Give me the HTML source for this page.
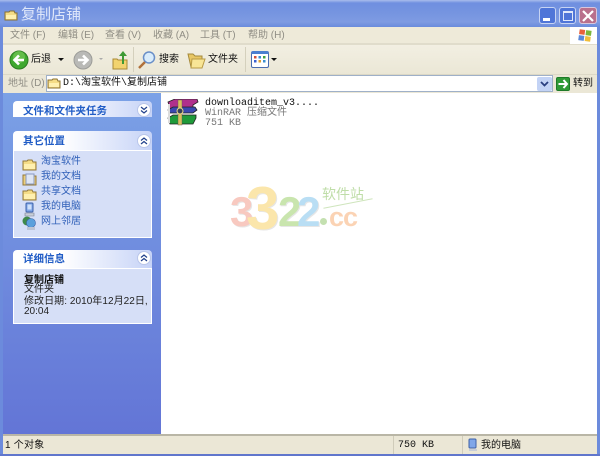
<!DOCTYPE html>
<html><head><meta charset="utf-8">
<style>
html,body{margin:0;padding:0;width:600px;height:457px;overflow:hidden;background:#fff}
*{box-sizing:border-box}
body{font:10px "Liberation Sans","WenQuanYi Zen Hei","Noto Sans CJK SC",sans-serif;position:relative;color:#222}
.a{position:absolute}
.t{position:absolute;white-space:nowrap;line-height:12px}
.g{color:#8f8d84}
.b{color:#215dc6}
.hd{position:absolute;left:13px;width:139px;background:linear-gradient(90deg,#fff 0%,#fff 35%,#c6d3f7 100%);border-radius:4px 4px 0 0}
.bd{position:absolute;left:13px;width:139px;background:#d6dff7;border:1px solid #fff;border-top:1px solid #fff}
.ch{position:absolute;left:137px;width:14px;height:14px;border-radius:50%;background:#fff;border:1px solid #b9c6ea}
.ht{position:absolute;left:23px;font-weight:bold;color:#215dc6;line-height:12px;font-size:10.5px;white-space:nowrap}
.w{position:absolute;font-family:"Liberation Sans",sans-serif;font-weight:bold;white-space:nowrap;text-shadow:1px 1px 0 #e6e6e6}
</style></head><body>
<!-- title -->
<div class="a" style="left:0;top:0;width:600px;height:27px;background:linear-gradient(180deg,#a9bcec 0,#6f8fe0 3px,#7594e0 12px,#7e9be2 22px,#6a8bdc 27px)"></div>
<svg class="a" style="left:4px;top:9px" width="14" height="12"><path d="M1 3h4l1-1h4l1 2h2v7H1z" fill="#f5dc86" stroke="#8a7132" stroke-width="1"/><path d="M2 6h10v4H2z" fill="#fff0b0"/></svg>
<div class="t" style="left:21px;top:7px;font-size:15px;line-height:16px;color:#dfe7fa">复制店铺</div>
<!-- window buttons -->
<div class="a" style="left:539px;top:7px;width:17px;height:17px;background:#4f75d8;border:1px solid #c6d3f3;border-radius:3px"></div>
<div class="a" style="left:543px;top:18px;width:7px;height:3px;background:#fff"></div>
<div class="a" style="left:559px;top:7px;width:17px;height:17px;background:#4f75d8;border:1px solid #c6d3f3;border-radius:3px"></div>
<div class="a" style="left:563px;top:11px;width:10px;height:10px;border:1px solid #dfe7fa;border-top:2px solid #dfe7fa"></div>
<div class="a" style="left:579px;top:7px;width:18px;height:17px;background:#b9708c;border:1px solid #d9c6dc;border-radius:3px"></div>
<svg class="a" style="left:582px;top:10px" width="12" height="12"><path d="M1 1L11 11M11 1L1 11" stroke="#fff" stroke-width="2.2"/></svg>
<!-- left/right edges -->
<div class="a" style="left:0;top:27px;width:3px;height:429px;background:#6c8bdc"></div>
<div class="a" style="left:597px;top:27px;width:3px;height:429px;background:#6c8bdc"></div>
<!-- menu -->
<div class="a" style="left:3px;top:27px;width:594px;height:17px;background:#eeead9"></div>
<div class="a" style="left:3px;top:43px;width:594px;height:2px;background:#e0dccb"></div>
<div class="a" style="left:570px;top:27px;width:27px;height:17px;background:#fff"></div>
<svg class="a" style="left:577px;top:28px" width="16" height="15"><g transform="rotate(8 8 7)"><rect x="2" y="2" width="5.5" height="5" fill="#e8603a"/><rect x="8.5" y="2" width="5.5" height="5" fill="#7db53a"/><rect x="2" y="8" width="5.5" height="5" fill="#5a88d8"/><rect x="8.5" y="8" width="5.5" height="5" fill="#f0bd3a"/></g></svg>
<div class="t g" style="left:10px;top:30px">文件 (F)</div>
<div class="t g" style="left:58px;top:30px">编辑 (E)</div>
<div class="t g" style="left:105px;top:30px">查看 (V)</div>
<div class="t g" style="left:153px;top:30px">收藏 (A)</div>
<div class="t g" style="left:200px;top:30px">工具 (T)</div>
<div class="t g" style="left:248px;top:30px">帮助 (H)</div>
<!-- toolbar -->
<div class="a" style="left:3px;top:45px;width:594px;height:29px;background:linear-gradient(180deg,#f2efe2,#ebe7d6)"></div>
<svg class="a" style="left:9px;top:50px" width="20" height="20"><circle cx="10" cy="10" r="9" fill="#3fa82f" stroke="#2c7d22"/><circle cx="10" cy="7" r="6" fill="#7ccb5c" opacity=".6"/><path d="M15 10H6M10 5.5L5.5 10L10 14.5" stroke="#fff" stroke-width="2.6" fill="none"/></svg>
<div class="t" style="left:31px;top:54px;color:#111">后退</div>
<div class="a" style="left:58px;top:58px;border:3px solid transparent;border-top:3px solid #111"></div>
<svg class="a" style="left:73px;top:50px" width="20" height="20"><circle cx="10" cy="10" r="9" fill="#b9b9b6" stroke="#9c9c98"/><path d="M5 10H14M10 5.5L14.5 10L10 14.5" stroke="#fff" stroke-width="2.6" fill="none"/></svg>
<div class="a" style="left:99px;top:58px;border:2px solid transparent;border-top:2px solid #aaa"></div>
<svg class="a" style="left:112px;top:50px" width="18" height="20"><path d="M1 9h4l1 1h9v9H1z" fill="#f2d36e" stroke="#a98a35"/><path d="M10 14V6H7l4-5 4 5h-3v8z" fill="#3e9a35"/></svg>
<div class="a" style="left:133px;top:47px;width:1px;height:25px;background:#d4d0bd"></div>
<svg class="a" style="left:137px;top:50px" width="20" height="20"><path d="M2 18L8 12" stroke="#b0703a" stroke-width="2.5"/><circle cx="12" cy="7.5" r="5.5" fill="#d9ecfb" stroke="#6a8fc8" stroke-width="1.5"/></svg>
<div class="t" style="left:159px;top:54px;color:#111">搜索</div>
<svg class="a" style="left:187px;top:51px" width="19" height="18"><path d="M1 3h5l2 2h7v11H4z" fill="#e8c765" stroke="#a58a3c"/><path d="M5 8h13l-3 9H4z" fill="#f8e596" stroke="#b89a45"/></svg>
<div class="t" style="left:208px;top:54px;color:#111">文件夹</div>
<div class="a" style="left:245px;top:47px;width:1px;height:25px;background:#d4d0bd"></div>
<div class="a" style="left:251px;top:51px;width:18px;height:17px;background:#fff;border:1px solid #4a6db0;border-top:3px solid #4a7fd0;border-radius:2px"></div>
<svg class="a" style="left:253px;top:55px" width="14" height="11"><g><rect x="1" y="1" width="2.5" height="2.5" fill="#d0503a"/><rect x="5.5" y="1" width="2.5" height="2.5" fill="#3a8ed0"/><rect x="10" y="1" width="2.5" height="2.5" fill="#40a040"/><rect x="1" y="5" width="2.5" height="2.5" fill="#3a60d0"/><rect x="5.5" y="5" width="2.5" height="2.5" fill="#e0a030"/><rect x="10" y="5" width="2.5" height="2.5" fill="#3a8ed0"/></g></svg>
<div class="a" style="left:271px;top:58px;border:3px solid transparent;border-top:3px solid #111"></div>
<!-- address -->
<div class="a" style="left:3px;top:74px;width:594px;height:19px;background:#ebe7d6;border-top:1px solid #dcd8c6"></div>
<div class="t g" style="left:8px;top:78px">地址 (D)</div>
<div class="a" style="left:46px;top:75px;width:507px;height:17px;background:#fff;border:1px solid #9fb0c8"></div>
<svg class="a" style="left:47px;top:77px" width="14" height="13"><path d="M1 3h4l1-1h4l1 2h2v7H1z" fill="#f5dc86" stroke="#8a7132"/><path d="M2 6h10v4H2z" fill="#fff0b0"/></svg>
<div class="t" style="left:63px;top:78px;color:#111;font-family:'Liberation Mono','WenQuanYi Zen Hei',monospace">D:\淘宝软件\复制店铺</div>
<div class="a" style="left:537px;top:77px;width:15px;height:14px;background:#c3d3f5;border-radius:2px"></div>
<svg class="a" style="left:540px;top:80px" width="9" height="8"><path d="M1 2L4.5 5.5L8 2" stroke="#2a3f80" stroke-width="1.8" fill="none"/></svg>
<div class="a" style="left:556px;top:77px;width:14px;height:14px;background:#2f9a36;border:1px solid #1e7a28;border-radius:2px"></div>
<svg class="a" style="left:557px;top:78px" width="12" height="12"><path d="M1.5 6H10M6.5 2L10 6L6.5 10" stroke="#fff" stroke-width="2" fill="none"/></svg>
<div class="t" style="left:573px;top:78px;color:#111">转到</div>
<!-- sidebar -->
<div class="a" style="left:3px;top:93px;width:158px;height:341px;background:linear-gradient(180deg,#7ba1e6,#6375d6)"></div>
<div class="hd" style="top:101px;height:16px"></div>
<div class="ht" style="top:105px;color:#215dc6">文件和文件夹任务</div>
<div class="ch" style="top:103px"></div>
<svg class="a" style="left:140px;top:106px" width="8" height="8"><path d="M1 1L4 3.5L7 1M1 4.5L4 7L7 4.5" stroke="#1f3f8a" stroke-width="1.2" fill="none"/></svg>
<div class="hd" style="top:131px;height:19px"></div>
<div class="ht" style="top:135px">其它位置</div>
<div class="ch" style="top:134px"></div>
<svg class="a" style="left:140px;top:137px" width="8" height="8"><path d="M1 3.5L4 1L7 3.5M1 7L4 4.5L7 7" stroke="#1f3f8a" stroke-width="1.2" fill="none"/></svg>
<div class="bd" style="top:150px;height:88px"></div>
<svg class="a" style="left:22px;top:158px" width="15" height="13"><path d="M1 3h4l1-1h4l1 2h3v8H1z" fill="#f5dc86" stroke="#94793a"/><path d="M2 6h11v5H2z" fill="#fff0b0"/></svg>
<div class="t b" style="left:41px;top:156px;color:#2f5fb8">淘宝软件</div>
<svg class="a" style="left:22px;top:172px" width="15" height="14"><path d="M1 3h4l1-1h4l1 2h3v9H1z" fill="#eccf7c" stroke="#94793a"/><rect x="4" y="2" width="8" height="10" fill="#dfe6f4" stroke="#8a9ac0"/></svg>
<div class="t b" style="left:41px;top:171px;color:#2f5fb8">我的文档</div>
<svg class="a" style="left:22px;top:188px" width="15" height="13"><path d="M1 3h4l1-1h4l1 2h3v8H1z" fill="#f5dc86" stroke="#94793a"/><path d="M2 6h11v5H2z" fill="#fff0b0"/></svg>
<div class="t b" style="left:41px;top:186px;color:#2f5fb8">共享文档</div>
<svg class="a" style="left:23px;top:202px" width="13" height="15"><rect x="3" y="1" width="7" height="9" rx="1" fill="#7fa6e8" stroke="#3f62a8"/><rect x="4.5" y="2.5" width="4" height="5" fill="#cfe0fa"/><path d="M2 11h9v3H2z" fill="#c8ced8" stroke="#7a8090" stroke-width=".6"/></svg>
<div class="t b" style="left:41px;top:201px;color:#2f5fb8">我的电脑</div>
<svg class="a" style="left:22px;top:216px" width="15" height="15"><circle cx="5" cy="5" r="4.5" fill="#3f8a4a"/><circle cx="9" cy="7" r="4.5" fill="#5aa0dc" stroke="#3f62a8" stroke-width=".6"/><rect x="5" y="11" width="8" height="3" fill="#bcc4d4"/></svg>
<div class="t b" style="left:41px;top:216px;color:#2f5fb8">网上邻居</div>
<div class="hd" style="top:250px;height:18px"></div>
<div class="ht" style="top:253px">详细信息</div>
<div class="ch" style="top:251px"></div>
<svg class="a" style="left:140px;top:254px" width="8" height="8"><path d="M1 3.5L4 1L7 3.5M1 7L4 4.5L7 7" stroke="#1f3f8a" stroke-width="1.2" fill="none"/></svg>
<div class="bd" style="top:268px;height:56px"></div>
<div class="t" style="left:24px;top:275px;font-weight:bold;color:#111">复制店铺</div>
<div class="t" style="left:24px;top:284px;color:#222">文件夹</div>
<div class="t" style="left:24px;top:296px;color:#222;letter-spacing:.05px">修改日期: 2010年12月22日,</div>
<div class="t" style="left:24px;top:306px;color:#222">20:04</div>
<!-- file -->
<svg class="a" style="left:167px;top:99px" width="34" height="27">
<path d="M1 3L8 0H30L31 3L26 6V10H3z" fill="#b0308c" stroke="#222" stroke-width=".8"/>
<path d="M1 11L6 8H28L30 11L26 14H3z" fill="#3a48b0" stroke="#222" stroke-width=".8"/>
<path d="M1 19L6 16H29V19L26 25H3z" fill="#1f9a3a" stroke="#222" stroke-width=".8"/>
<path d="M2 5V24" stroke="#ddd" stroke-width="2"/>
<rect x="11" y="1" width="4" height="25" fill="#d8c060" stroke="#555" stroke-width=".4"/>
<circle cx="13" cy="12" r="3" fill="#35405c" stroke="#e8d880"/>
</svg>
<div class="t" style="left:205px;top:98px;color:#111;font-family:'Liberation Mono','WenQuanYi Zen Hei',monospace;font-size:10px">downloaditem_v3....</div>
<div class="t" style="left:205px;top:108px;color:#777;font-family:'Liberation Mono','WenQuanYi Zen Hei',monospace;font-size:10px">WinRAR 压缩文件</div>
<div class="t" style="left:205px;top:118px;color:#777;font-family:'Liberation Mono',monospace;font-size:10px">751 KB</div>
<!-- watermark -->
<div class="w" style="left:230px;top:191px;font-size:42px;line-height:42px;color:#f8c9c0">3</div>
<div class="w" style="left:278px;top:191px;font-size:42px;line-height:42px;color:#c9e5ae">2</div>
<div class="w" style="left:297px;top:191px;font-size:42px;line-height:42px;color:#b9def4">2</div>
<div class="w" style="left:246px;top:179px;font-size:60px;line-height:60px;color:#fbe6ab">3</div>
<div class="t" style="left:322px;top:186px;font-size:14px;line-height:16px;color:#bfdda8">软件站</div>
<div class="a" style="left:323px;top:203px;width:50px;height:1px;background:#cfe5bd;transform:rotate(-11deg)"></div>
<div class="a" style="left:320px;top:218px;width:7px;height:7px;border-radius:50%;background:#c4e0b0"></div>
<div class="w" style="left:329px;top:204px;font-size:27px;line-height:27px;letter-spacing:-1px;color:#fbd3b4;text-shadow:none">cc</div>
<!-- status -->
<div class="a" style="left:3px;top:434px;width:594px;height:2px;background:#b9b6a6"></div>
<div class="a" style="left:3px;top:436px;width:594px;height:18px;background:#ebe7d6"></div>
<div class="a" style="left:0;top:454px;width:600px;height:2px;background:#6076cc"></div>
<div class="a" style="left:393px;top:436px;width:1px;height:18px;background:#d0ccba"></div>
<div class="a" style="left:462px;top:436px;width:1px;height:18px;background:#d0ccba"></div>
<div class="t" style="left:5px;top:440px;color:#111;letter-spacing:.2px">1 个对象</div>
<div class="t" style="left:398px;top:440px;color:#111;font-family:'Liberation Mono',monospace">750 KB</div>
<svg class="a" style="left:467px;top:438px" width="12" height="14"><rect x="2" y="1" width="7" height="9" rx="1" fill="#7fa6e8" stroke="#3f62a8"/><path d="M2 11h8v2H2z" fill="#c8ced8"/></svg>
<div class="t" style="left:481px;top:440px;color:#111">我的电脑</div>
</body></html>
